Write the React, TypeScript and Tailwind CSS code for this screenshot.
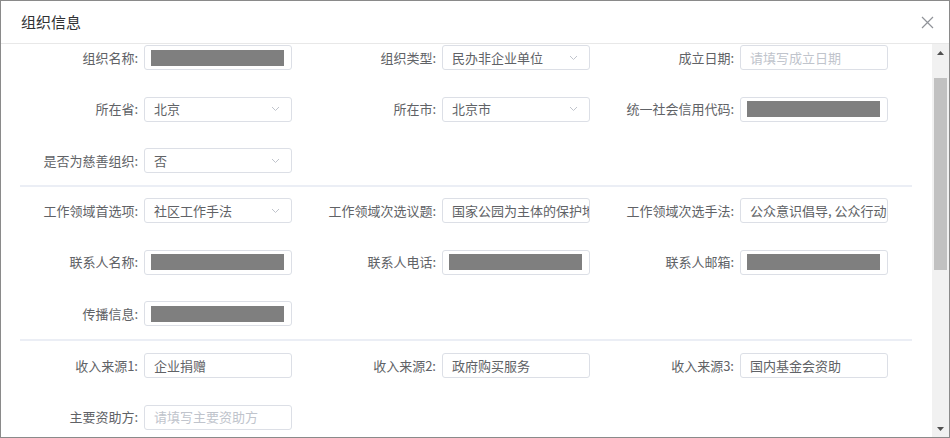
// 组织信息弹窗：只读表单

import React from 'react';

type Field = {
    label: string;
    value?: string;
    placeholder?: string;
    select?: boolean;
    masked?: boolean;
};

const sections: Field[][] = [
    [
        { label: '组织名称:', masked: true },
        { label: '组织类型:', value: '民办非企业单位', select: true },
        { label: '成立日期:', placeholder: '请填写成立日期' },
        { label: '所在省:', value: '北京', select: true },
        { label: '所在市:', value: '北京市', select: true },
        { label: '统一社会信用代码:', masked: true },
        { label: '是否为慈善组织:', value: '否', select: true },
    ],
    [
        { label: '工作领域首选项:', value: '社区工作手法', select: true },
        { label: '工作领域次选议题:', value: '国家公园为主体的保护地' },
        { label: '工作领域次选手法:', value: '公众意识倡导, 公众行动' },
        { label: '联系人名称:', masked: true },
        { label: '联系人电话:', masked: true },
        { label: '联系人邮箱:', masked: true },
        { label: '传播信息:', masked: true },
    ],
    [
        { label: '收入来源1:', value: '企业捐赠' },
        { label: '收入来源2:', value: '政府购买服务' },
        { label: '收入来源3:', value: '国内基金会资助' },
        { label: '主要资助方:', placeholder: '请填写主要资助方' },
    ],
];

const font = { fontFamily: '"Noto Sans CJK SC", "Noto Sans", sans-serif' };

const Chevron = () => (
    <svg width="9" height="6" viewBox="0 0 9 6" className="shrink-0">
        <polyline points="1,1 4.5,4.5 8,1" fill="none" stroke="#c0c4cc" strokeWidth="1" />
    </svg>
);

const FormItem: React.FC<{ field: Field }> = ({ field }) => (
    <div className="flex items-center h-[25px]">
        <label className="w-[124px] shrink-0 text-right pr-[6px] text-[13px] text-[#606266] whitespace-nowrap">
            {field.label}
        </label>
        <div className="w-[148px] h-[25px] shrink-0 flex items-center border border-[#dcdfe6] rounded-[3px] bg-white overflow-hidden">
            {field.masked ? (
                <div className="ml-[6px] w-[133px] h-[16px] bg-[#7f7f7f]" />
            ) : (
                <>
                    <span
                        className={`flex-1 min-w-0 pl-[9px] text-[13px] whitespace-nowrap overflow-hidden ${
                            field.value ? 'text-[#606266]' : 'text-[#c0c4cc]'
                        }`}
                    >
                        {field.value ?? field.placeholder}
                    </span>
                    {field.select && (
                        <span className="pr-[11px] pl-2 flex items-center">
                            <Chevron />
                        </span>
                    )}
                </>
            )}
        </div>
    </div>
);

const Section: React.FC<{ fields: Field[]; className: string }> = ({ fields, className }) => (
    <div className={`grid grid-cols-[repeat(3,298px)] gap-y-[26.5px] ${className}`}>
        {fields.map((f) => (
            <FormItem key={f.label} field={f} />
        ))}
    </div>
);

export default function App() {
    return (
        <div
            className="w-[950px] h-[438px] bg-white border border-[#8a8a8a] flex flex-col overflow-hidden"
            style={font}
        >
            {/* 标题栏 */}
            <div className="h-[43px] shrink-0 flex items-center justify-between pl-5 pr-[15px] border-b border-[#e8e8e8]">
                <span className="text-[15px] text-[#303133]">组织信息</span>
                <svg width="13" height="13" viewBox="0 0 13 13">
                    <path d="M1 1 L12 12 M12 1 L1 12" stroke="#909399" strokeWidth="1.2" />
                </svg>
            </div>

            <div className="flex-1 flex min-h-0">
                {/* 表单内容 */}
                <div className="flex-1 overflow-hidden pl-[19px]">
                    <Section fields={sections[0]} className="pt-px pb-3" />
                    <div className="w-[892px] h-[2px] bg-[#ebeef5]" />
                    <Section fields={sections[1]} className="pt-[11px] pb-[13px]" />
                    <div className="w-[892px] h-[2px] bg-[#ebeef5]" />
                    <Section fields={sections[2]} className="pt-3 pb-6" />
                </div>

                {/* 滚动条 */}
                <div className="w-[17px] shrink-0 bg-[#f1f1f1] flex flex-col items-center">
                    <div className="h-[17px] flex items-center justify-center">
                        <svg width="7" height="4" viewBox="0 0 7 4">
                            <polygon points="0,4 3.5,0 7,4" fill="#505050" />
                        </svg>
                    </div>
                    <div className="mt-[17px] w-[13px] h-[192px] bg-[#c1c1c1]" />
                    <div className="flex-1" />
                    <div className="h-[17px] flex items-center justify-center">
                        <svg width="7" height="4" viewBox="0 0 7 4">
                            <polygon points="0,0 3.5,4 7,0" fill="#505050" />
                        </svg>
                    </div>
                </div>
            </div>
        </div>
    );
}
